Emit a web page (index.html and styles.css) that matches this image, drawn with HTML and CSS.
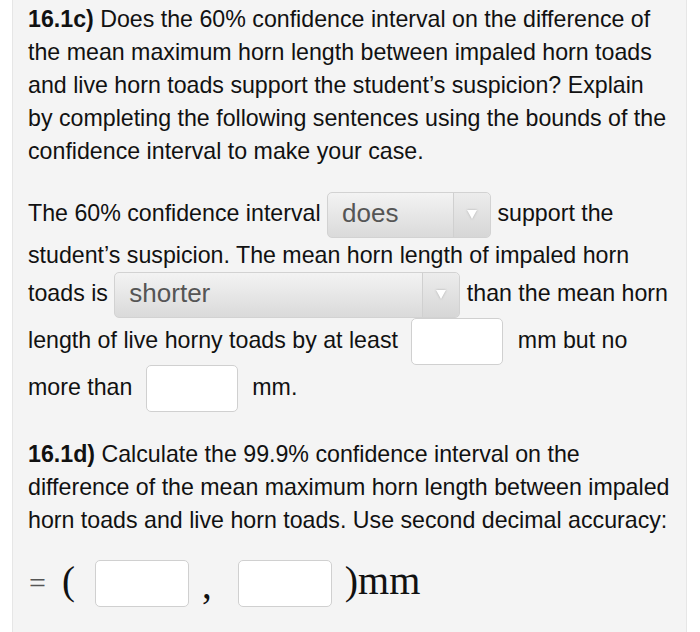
FILE: index.html
```html
<!DOCTYPE html>
<html>
<head>
<meta charset="utf-8">
<link rel="stylesheet" href="styles.css">
</head>
<body>
<div class="panel">
  <p class="question"><b>16.1c)</b> Does the 60% confidence interval on the difference of the mean maximum horn length between impaled horn toads and live horn toads support the student’s suspicion? Explain by completing the following sentences using the bounds of the confidence interval to make your case.</p>

  <p class="fill">The 60% confidence interval <span class="select sel-does"><span class="sel-text">does</span><span class="sel-arrow"><span class="tri"></span></span></span> support the<br>student’s suspicion. The mean horn length of impaled horn<br>toads is <span class="select sel-shorter"><span class="sel-text">shorter</span><span class="sel-arrow"><span class="tri"></span></span></span> than the mean horn<br>length of live horny toads by at least <span class="box"></span> mm but no<br>more than <span class="box"></span> mm.</p>

  <p class="question q2"><b>16.1d)</b> Calculate the 99.9% confidence interval on the difference of the mean maximum horn length between impaled horn toads and live horn toads. Use second decimal accuracy:</p>

  <div class="formula">
    <span class="eq">=</span>
    <span class="paren">(</span>
    <span class="box fbox first"></span>
    <span class="comma">,</span>
    <span class="box fbox second"></span>
    <span class="paren close">)mm</span>
  </div>
</div>
</body>
</html>
```

FILE: styles.css
```css
html, body {
  margin: 0;
  padding: 0;
  background: #ffffff;
}

.panel {
  margin-left: 12px;
  width: 675px;
  height: 640px;
  box-sizing: border-box;
  background: #f4f4f4;
  border-left: 1px solid #e6e6e6;
  border-right: 1px solid #e6e6e6;
  padding: 3px 14px 0 15px;
  font-family: "Liberation Sans", Arial, sans-serif;
  font-size: 23.2px;
  color: #111;
}

p {
  margin: 0;
}

.question {
  line-height: 33px;
}

.question b {
  font-weight: bold;
}

.fill {
  margin-top: 24px;
  line-height: 34px;
}

.select {
  display: inline-block;
  vertical-align: middle;
  height: 46px;
  box-sizing: border-box;
  border: 1px solid #d2d2d2;
  border-radius: 5px;
  background: linear-gradient(#f3f3f3, #dadada);
  position: relative;
}

.sel-does {
  width: 164px;
}

.sel-shorter {
  width: 346px;
}

.sel-text {
  position: absolute;
  left: 14px;
  top: -2px;
  line-height: 44px;
  font-size: 26px;
  color: #555;
}

.sel-arrow {
  position: absolute;
  right: 0;
  top: 0;
  bottom: 0;
  width: 36px;
  border-left: 1px solid #d0d0d0;
  background: linear-gradient(#ececec, #d6d6d6);
  border-radius: 0 5px 5px 0;
}

.tri {
  position: absolute;
  left: 13px;
  top: 17px;
  width: 0;
  height: 0;
  border-left: 5px solid transparent;
  border-right: 5px solid transparent;
  border-top: 9px solid #ffffff;
  filter: drop-shadow(0 0 1px #aaaaaa);
}

.box {
  display: inline-block;
  vertical-align: middle;
  width: 92px;
  height: 47px;
  box-sizing: border-box;
  background: #ffffff;
  border: 1px solid #d0d0d0;
  border-radius: 5px;
  margin: 0 8px 0 7px;
}

.q2 {
  margin-top: 26px;
}

.formula {
  display: flex;
  align-items: center;
  margin-top: 23px;
  font-family: "Liberation Serif", "Times New Roman", serif;
  color: #111;
}

.eq {
  font-size: 30px;
  color: #555;
  width: 34px;
  position: relative;
  left: 1px;
  top: -1px;
}

.paren {
  font-size: 39px;
  position: relative;
  top: -3px;
}

.formula .fbox {
  margin: 0;
  width: 94px;
  height: 47px;
}

.formula .first {
  margin-left: 20px;
}

.comma {
  font-size: 39px;
  margin: 0 26px 0 13px;
  position: relative;
  top: 1px;
}

.close {
  margin-left: 13px;
  font-size: 40px;
}
```
